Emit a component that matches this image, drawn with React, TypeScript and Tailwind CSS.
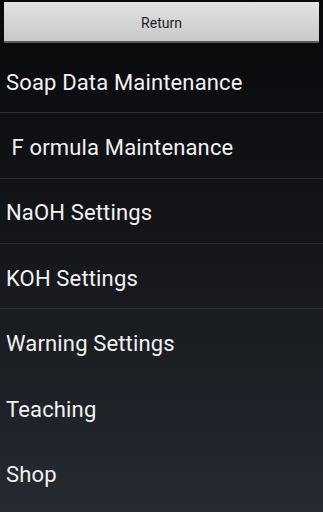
import React from 'react';

/** One entry in the settings menu. */
interface MenuItem {
  label: string;
  divider: boolean;
}

const ITEMS: MenuItem[] = [
  { label: 'Soap Data Maintenance', divider: true },
  { label: ' F ormula Maintenance', divider: true },
  { label: 'NaOH Settings', divider: true },
  { label: 'KOH Settings', divider: true },
  { label: 'Warning Settings', divider: false },
  { label: 'Teaching', divider: false },
  { label: 'Shop', divider: false }
];

export default function App() {
  return (
    <div
      className="flex h-[512px] w-[323px] flex-col overflow-hidden bg-gradient-to-b from-[#08090b] via-[#15171b] to-[#262b32]"
      style={{ fontFamily: 'Roboto, "Noto Sans", sans-serif' }}
    >
      <div className="px-1 pt-[2px] pb-[5px]">
        <button
          type="button"
          className="flex h-[41px] w-full items-center justify-center border-b-2 border-[#5a5a5a] bg-gradient-to-b from-[#e2e2e2] to-[#c9c9c9] pt-[4px] text-[14px] text-[#1e1e1e]"
        >
          Return
        </button>
      </div>

      <div className="flex flex-col">
        {ITEMS.map((item) => (
          <div
            key={item.label}
            className={`flex h-[65.3px] items-center whitespace-pre pt-[4px] pl-[6px] text-[22px] tracking-[0.15px] text-[#f2f2f2] ${
              item.divider ? 'border-b border-[#2b2e33]' : ''
            }`}
          >
            {item.label}
          </div>
        ))}
      </div>
    </div>
  );
}
